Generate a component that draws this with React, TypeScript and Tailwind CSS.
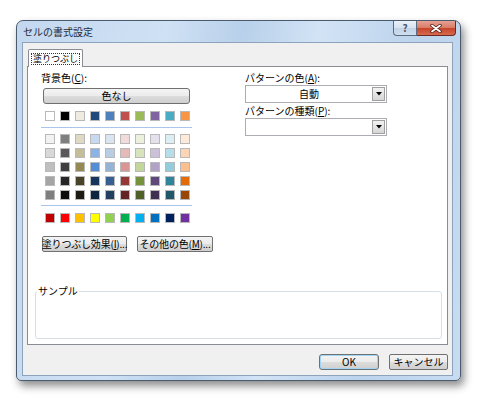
import React from 'react'

const theme = ['#ffffff', '#000000', '#eeece1', '#1f497d', '#4f81bd', '#c0504d', '#9bbb59', '#8064a2', '#4bacc6', '#f79646']

const tints = [
  ['#f2f2f2', '#7f7f7f', '#ddd9c3', '#c6d9f0', '#dbe5f1', '#f2dcdb', '#ebf1dd', '#e5e0ec', '#dbeef3', '#fdeada'],
  ['#d8d8d8', '#595959', '#c4bd97', '#8db3e2', '#b8cce4', '#e5b9b7', '#d7e3bc', '#ccc1d9', '#b7dde8', '#fbd5b5'],
  ['#bfbfbf', '#3f3f3f', '#938953', '#548dd4', '#95b3d7', '#d99694', '#c3d69b', '#b2a2c7', '#92cddc', '#fac08f'],
  ['#a5a5a5', '#262626', '#494429', '#17365d', '#366092', '#953734', '#76923c', '#5f497a', '#31859b', '#e36c09'],
  ['#7f7f7f', '#0c0c0c', '#1d1b10', '#0f243e', '#244061', '#632423', '#4f6128', '#3f3151', '#205867', '#974806'],
]

const standard = ['#c00000', '#ff0000', '#ffc000', '#ffff00', '#92d050', '#00b050', '#00b0f0', '#0070c0', '#002060', '#7030a0']

const SwatchRow = ({ colors }: { colors: string[] }) => (
  <div className="flex gap-[5px]">
    {colors.map((c, i) => (
      <div key={i} className="w-[10px] h-[10px] border border-[#b9b9b9]" style={{ backgroundColor: c }} />
    ))}
  </div>
)

// win7 style push button
const Btn = ({ children, className = '' }: { children: React.ReactNode; className?: string }) => (
  <div
    className={
      'h-[16px] flex items-center justify-center whitespace-nowrap rounded-[2px] border border-[#707070] bg-[linear-gradient(180deg,#f4f4f4_0%,#ebebeb_50%,#dddddd_51%,#cfcfcf_100%)] text-[10px] leading-none text-black ' +
      className
    }
  >
    {children}
  </div>
)

const Combo = ({ value }: { value?: string }) => (
  <div className="w-[142px] h-[18px] flex border border-[#abadb3] bg-white">
    <div className="flex-1 flex items-center justify-center text-[10px] leading-none">{value}</div>
    <div className="w-[13px] my-px mr-px flex items-center justify-center border border-[#a0a0a0] bg-[linear-gradient(180deg,#f2f2f2,#d6d6d6)]">
      <svg width="6" height="4" viewBox="0 0 6 4">
        <path d="M0 0h6L3 3.5z" fill="#000" />
      </svg>
    </div>
  </div>
)

export default function App() {
  return (
    <div className="w-[480px] h-[402px] bg-white pt-[20px] pl-[16px] font-['Noto_Sans_CJK_JP','Noto_Sans',sans-serif] text-black whitespace-nowrap">
      {/* window */}
      <div className="w-[445px] h-[361px] flex flex-col rounded-t-[7px] rounded-b-[5px] border border-[#4b5b6f] bg-[linear-gradient(100deg,#c3d8ef_0%,#cfe1f4_30%,#b8d0ea_45%,#d2e3f5_60%,#bcd3ec_80%,#c8dcf1_100%)] shadow-[3px_5px_9px_rgba(0,0,0,0.45)]">
        {/* title bar */}
        <div className="h-[21px] flex justify-between items-start">
          <div className="self-center pl-[6px] pt-[1px] text-[10px] leading-none text-[#1e2a3a]">セルの書式設定</div>
          <div className="flex mr-[4px]">
            <div className="w-[24px] h-[15px] flex items-center justify-center rounded-bl-[4px] border border-t-0 border-[#5b6b80] bg-[linear-gradient(180deg,#e9f0f8_0%,#d7e3f1_50%,#c1d3e8_51%,#cfdeef_100%)] text-[10px] leading-none font-bold text-[#4a5566]">
              ?
            </div>
            <div className="w-[39px] h-[15px] flex items-center justify-center rounded-br-[4px] border border-t-0 border-l-0 border-[#6b2b22] bg-[linear-gradient(180deg,#e6a193_0%,#d97a66_50%,#c4432b_51%,#d86a4e_100%)]">
              <svg width="12" height="9" viewBox="0 0 12 9">
                <path d="M2 1.5l8 6M10 1.5l-8 6" stroke="#4a1a14" strokeWidth="3.4" strokeLinecap="round" />
                <path d="M2 1.5l8 6M10 1.5l-8 6" stroke="#fff" strokeWidth="1.8" strokeLinecap="round" />
              </svg>
            </div>
          </div>
        </div>

        {/* client area */}
        <div className="flex-1 ml-[5px] mr-[7px] mb-[4px] border border-[#8da3bc] bg-[#f0f0f0] flex flex-col px-[4px] pt-[6px]">
          {/* tab header */}
          <div className="h-[17px] flex">
            <div className="ml-[1px] w-[55px] h-[18px] relative z-10 border border-b-0 border-[#898c95] bg-white flex items-center justify-center rounded-t-[2px]">
              <div className="px-[1px] h-[12px] flex items-center border border-dotted border-[#333] text-[9px] leading-none">塗りつぶし</div>
            </div>
          </div>

          {/* tab page */}
          <div className="h-[279px] border border-[#898c95] bg-white flex flex-col">
            <div className="flex pl-[13px] pt-[4px]">
              {/* background colour */}
              <div className="w-[204px] flex flex-col">
                <div className="h-[14px] leading-[14px] text-[10px]">
                  背景色(<span className="underline">C</span>):
                </div>
                <Btn className="mt-[3px] ml-[2px] w-[147px] rounded-[3px] border-[#3c3c3c]">色なし</Btn>
                <div className="mt-[7px] ml-[4px]">
                  <SwatchRow colors={theme} />
                </div>
                <div className="mt-[6px] w-[151px] h-px bg-[#a9c6ea]" />
                <div className="mt-[6px] ml-[4px] flex flex-col gap-[4px]">
                  {tints.map((r, i) => (
                    <SwatchRow key={i} colors={r} />
                  ))}
                </div>
                <div className="mt-[5px] w-[151px] h-px bg-[#a9c6ea]" />
                <div className="mt-[7px] ml-[4px]">
                  <SwatchRow colors={standard} />
                </div>
                <div className="mt-[13px] ml-[1px] flex gap-[10px]">
                  <Btn className="w-[85px] text-[9px] tracking-[-0.2px]">
                    塗りつぶし効果(<span className="underline">I</span>)...
                  </Btn>
                  <Btn className="w-[76px] text-[9px] tracking-[-0.2px]">
                    その他の色(<span className="underline">M</span>)...
                  </Btn>
                </div>
              </div>

              {/* pattern */}
              <div className="w-[142px] flex flex-col">
                <div className="h-[14px] leading-[14px] text-[10px]">
                  パターンの色(<span className="underline">A</span>):
                </div>
                <Combo value="自動" />
                <div className="h-[15px] leading-[15px] text-[10px]">
                  パターンの種類(<span className="underline">P</span>):
                </div>
                <Combo />
              </div>
            </div>

            {/* sample */}
            <div className="mt-auto mb-[5px] ml-[7px] w-[407px] h-[48px] relative rounded-[3px] border border-[#d5dfe5]">
              <div className="absolute -top-[8px] left-[1px] bg-white px-[1px] text-[10px] leading-[14px]">サンプル</div>
            </div>
          </div>

          {/* dialog buttons */}
          <div className="mt-[9px] flex justify-end gap-[10px]">
            <Btn className="w-[60px] rounded-[3px] border-[#3c7fb1] shadow-[inset_0_0_0_1px_#9fd5f5]">OK</Btn>
            <Btn className="w-[59px]">キャンセル</Btn>
          </div>
        </div>
      </div>
    </div>
  )
}
